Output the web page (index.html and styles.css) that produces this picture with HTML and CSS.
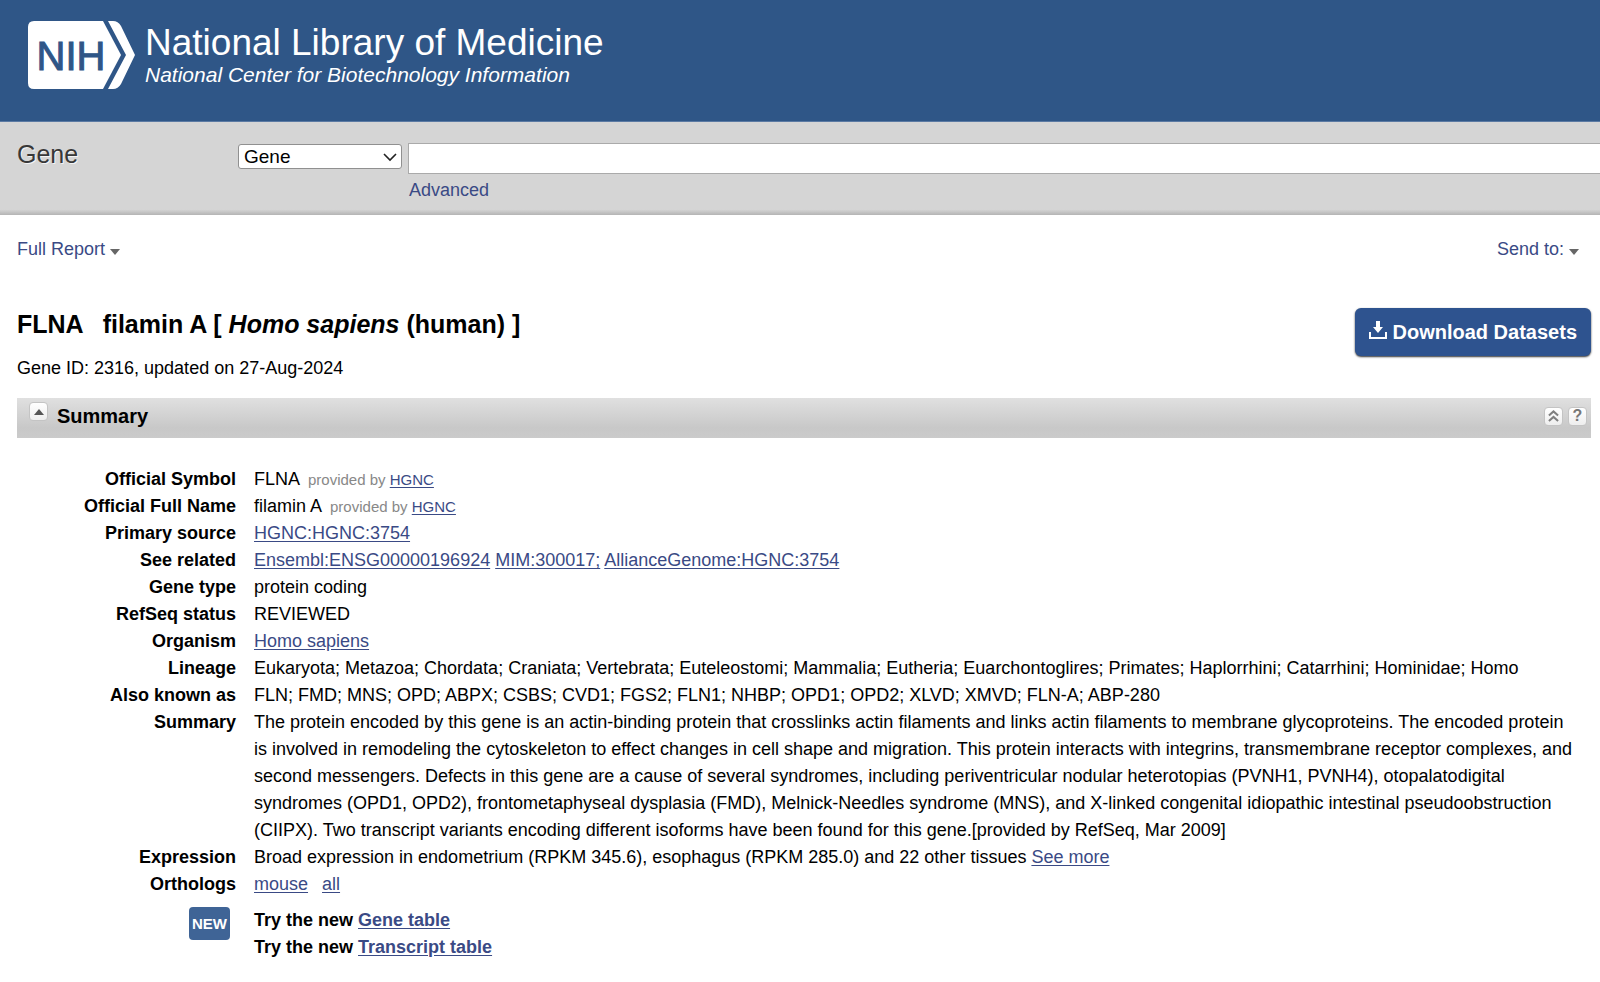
FILE: index.html
```html
<!DOCTYPE html>
<html lang="en">
<head>
<meta charset="utf-8">
<title>FLNA filamin A [Homo sapiens (human)] - Gene - NCBI</title>
<link rel="stylesheet" href="styles.css">
</head>
<body>
<header class="masthead">
  <svg class="nih" width="107" height="68" viewBox="0 0 107 68" role="img" aria-label="NIH">
    <path fill="#fff" d="M6 0H75L93 34L75 68H6Q0 68 0 62V6Q0 0 6 0Z"/>
    <path fill="#fff" d="M80 0H85Q90 0 93 5L107 34L93 63Q90 68 85 68H80L98 34Z"/>
    <text class="nih-text" x="43" y="49" text-anchor="middle">NIH</text>
  </svg>
  <div class="brand">
    <span class="brand-name">National Library of Medicine</span>
    <span class="brand-sub">National Center for Biotechnology Information</span>
  </div>
</header>
<form class="search">
  <span class="db-name">Gene</span>
  <div class="select-wrap">
    <select class="db-select" aria-label="Database"><option>Gene</option></select>
    <svg class="chevron" width="14" height="9" viewBox="0 0 14 9"><path d="M1 1L7 7L13 1" fill="none" stroke="#222" stroke-width="1.6"/></svg>
  </div>
  <div class="term">
    <input class="term-input" type="text" aria-label="Search term">
    <a class="plain" href="#">Advanced</a>
  </div>
</form>
<main class="content">
  <div class="toolbar">
    <a class="plain menu" href="#">Full Report<span class="caret"></span></a>
    <a class="plain menu" href="#">Send to:<span class="caret"></span></a>
  </div>
  <div class="heading">
    <div>
      <h1 class="title"><span class="symbol">FLNA</span>filamin A [ <em>Homo sapiens</em> (human) ]</h1>
      <p class="gene-id">Gene ID: 2316, updated on 27-Aug-2024</p>
    </div>
    <button class="download" type="button">
      <svg width="18" height="22" viewBox="0 0 18 22"><path d="M1 11V17H17V11" fill="none" stroke="#fff" stroke-width="2"/><path fill="#fff" d="M7 0H11V6H14L9 12L4 6H7Z"/></svg>
      Download Datasets
    </button>
  </div>
  <section>
    <div class="section-bar">
      <button class="mini mini-toggle" type="button" aria-label="Collapse Summary"><svg width="10" height="6" viewBox="0 0 10 6"><path fill="#555" d="M0 6L5 0L10 6Z"/></svg></button>
      <h2 class="section-title">Summary</h2>
      <button class="mini" type="button" aria-label="Go to top"><svg width="11" height="12" viewBox="0 0 12 13"><path d="M1 6L6 1.500L11 6M1 12L6 7.500L11 12" fill="none" stroke="#808080" stroke-width="2.200"/></svg></button>
      <button class="mini" type="button" aria-label="Help">?</button>
    </div>
    <dl class="summary">
      <dt>Official Symbol</dt><dd>FLNA<span class="provided">provided by <a href="#">HGNC</a></span></dd>
      <dt>Official Full Name</dt><dd>filamin A<span class="provided">provided by <a href="#">HGNC</a></span></dd>
      <dt>Primary source</dt><dd><a href="#">HGNC:HGNC:3754</a></dd>
      <dt>See related</dt><dd><a href="#">Ensembl:ENSG00000196924</a> <a href="#">MIM:300017;</a> <a href="#">AllianceGenome:HGNC:3754</a></dd>
      <dt>Gene type</dt><dd>protein coding</dd>
      <dt>RefSeq status</dt><dd>REVIEWED</dd>
      <dt>Organism</dt><dd><a href="#">Homo sapiens</a></dd>
      <dt>Lineage</dt><dd>Eukaryota; Metazoa; Chordata; Craniata; Vertebrata; Euteleostomi; Mammalia; Eutheria; Euarchontoglires; Primates; Haplorrhini; Catarrhini; Hominidae; Homo</dd>
      <dt>Also known as</dt><dd>FLN; FMD; MNS; OPD; ABPX; CSBS; CVD1; FGS2; FLN1; NHBP; OPD1; OPD2; XLVD; XMVD; FLN-A; ABP-280</dd>
      <dt>Summary</dt><dd>The protein encoded by this gene is an actin-binding protein that crosslinks actin filaments and links actin filaments to membrane glycoproteins. The encoded protein is involved in remodeling the cytoskeleton to effect changes in cell shape and migration. This protein interacts with integrins, transmembrane receptor complexes, and second messengers. Defects in this gene are a cause of several syndromes, including periventricular nodular heterotopias (PVNH1, PVNH4), otopalatodigital syndromes (OPD1, OPD2), frontometaphyseal dysplasia (FMD), Melnick-Needles syndrome (MNS), and X-linked congenital idiopathic intestinal pseudoobstruction (CIIPX). Two transcript variants encoding different isoforms have been found for this gene.[provided by RefSeq, Mar 2009]</dd>
      <dt>Expression</dt><dd>Broad expression in endometrium (RPKM 345.6), esophagus (RPKM 285.0) and 22 other tissues <a href="#">See more</a></dd>
      <dt>Orthologs</dt><dd class="orthologs"><a href="#">mouse</a><a href="#">all</a></dd>
      <dt class="promo"><span class="new">NEW</span></dt><dd class="promo">Try the new <a href="#">Gene table</a><br>Try the new <a href="#">Transcript table</a></dd>
    </dl>
  </section>
</main>
</body>
</html>
```
FILE: styles.css
```css
* { box-sizing: border-box; }
body {
  margin: 0;
  background: #fff;
  color: #000;
  font: 18px/27px "Liberation Sans", Arial, sans-serif;
  overflow-x: hidden;
}
a { color: #3a4a85; text-underline-offset: 2px; }
.plain { text-decoration: none; }

.masthead {
  display: flex;
  align-items: flex-start;
  gap: 10px;
  height: 122px;
  padding: 21px 28px 0;
  background: #2f5687;
  border-bottom: 1px solid #5b7aa3;
}
.nih { flex: none; }
.nih-text { font-family: "Liberation Sans", Arial, sans-serif; font-size: 40px; fill: #2f5687; stroke: #2f5687; stroke-width: 1px; }
.brand { display: flex; flex-direction: column; color: #fff; white-space: nowrap; }
.brand-name { font-size: 37px; line-height: 44px; }
.brand-sub { font-size: 21px; line-height: 20px; font-style: italic; }

.search {
  display: flex;
  align-items: flex-start;
  height: 93px;
  padding: 21px 0 0 17px;
  background: linear-gradient(#d5d5d5 94%, #b4b4b4);
}
.db-name { width: 221px; font-size: 25px; line-height: 23px; color: #383838; text-shadow: 1px 1px 0 #f4f4f4; }
.select-wrap { position: relative; width: 164px; margin: 1px 6px 0 0; }
.db-select {
  appearance: none;
  display: block;
  width: 100%;
  height: 25px;
  padding: 0 5px;
  border: 1px solid #909090;
  border-radius: 3px;
  background: #fff;
  color: #000;
  font: inherit;
  font-size: 19px;
  line-height: 23px;
}
.chevron { position: absolute; right: 5px; top: 9px; pointer-events: none; }
.term { display: flex; flex: 1; flex-direction: column; align-items: flex-start; }
.term-input { width: 100%; height: 31px; border: 1px solid #aaa; border-right: 0; background: #fff; font: inherit; }
.term .plain { margin-left: 1px; line-height: 32px; }

.content { padding: 21px 9px 24px 17px; }
.toolbar { display: flex; justify-content: space-between; padding-right: 12px; }
.menu { display: flex; align-items: center; gap: 5px; }
.caret { margin-top: 4px; border: 5px solid transparent; border-top: 6px solid #666; border-bottom: 0; }
.heading { display: flex; justify-content: space-between; align-items: flex-start; margin-top: 45px; }
.title { margin: 0; font-size: 25px; line-height: 32px; }
.symbol { margin-right: 19px; }
.gene-id { margin: 15px 0 16px; }
.download {
  display: flex;
  align-items: center;
  gap: 6px;
  height: 48px;
  padding: 0 14px;
  border: 0;
  border-radius: 6px;
  background: #2e538f;
  box-shadow: 0 1px 2px #333;
  color: #fff;
  font: bold 20px/24px "Liberation Sans", Arial, sans-serif;
}
.section-bar {
  display: flex;
  align-items: center;
  gap: 5px;
  height: 40px;
  padding: 0 4px 4px 12px;
  background: linear-gradient(#e0e0e0, #c8c8c8 75%, #cbcbcb);
}
.mini {
  display: flex;
  align-items: center;
  justify-content: center;
  width: 19px;
  height: 19px;
  padding: 0;
  border: 1px solid #c4c4c4;
  border-radius: 4px;
  background: linear-gradient(#fff, #eee);
  color: #777;
  font: bold 16px/16px "Liberation Sans", Arial, sans-serif;
}
.mini-toggle { margin-bottom: 9px; }
.section-title { flex: 1; margin: 0 0 0 4px; font-size: 20px; line-height: 27px; }

.summary { display: grid; grid-template-columns: 219px 1fr; column-gap: 18px; margin: 28px 0 0; padding-right: 16px; }
.summary dt { font-weight: bold; text-align: right; }
.summary dd { margin: 0; }
.provided { margin-left: 8px; font-size: 15px; line-height: 15px; color: #888; }
.orthologs { display: flex; gap: 14px; }
.summary .promo { margin-top: 9px; font-weight: bold; }
.new {
  display: inline-block;
  margin-right: 6px;
  padding: 0 3px;
  border-radius: 4px;
  background: #3f6496;
  color: #fff;
  font-size: 15px;
  line-height: 33px;
}
```
